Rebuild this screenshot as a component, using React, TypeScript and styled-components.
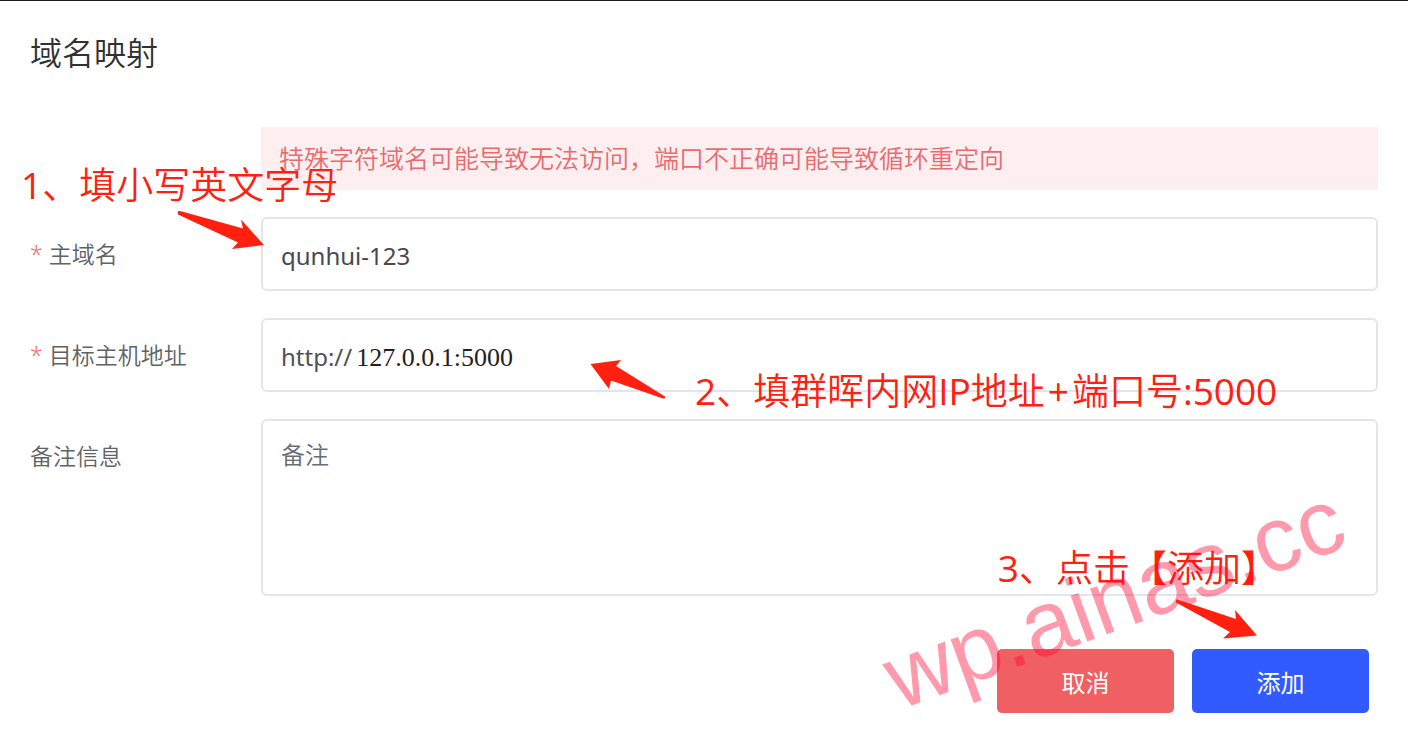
import React, { useState } from "react";
import styled, { createGlobalStyle } from "styled-components";

const GlobalStyle = createGlobalStyle`
  * { box-sizing: border-box; }
  body {
    margin: 0;
    background: #fff;
    font-family: "Noto Sans", "Noto Sans CJK SC", sans-serif;
    color: #606266;
  }
`;

const Page = styled.main`
  position: relative;
  overflow: hidden;
  border-top: 1px solid #1f1f23;
  padding: 28px 30px 30px;
`;

const Title = styled.h1`
  margin: 0 0 50px;
  font-size: 32px;
  line-height: 48px;
  font-weight: 350;
  color: #303133;
`;

const Form = styled.form`
  display: flex;
  flex-direction: column;
  gap: 27px;
`;

const Alert = styled.p`
  margin: 0 0 0 231px;
  padding: 0 18px;
  background: #fdeff0;
  color: #e96b70;
  font-size: 25px;
  line-height: 63px;
  font-weight: 350;
`;

const Row = styled.div`
  display: flex;
  align-items: flex-start;
`;

const Label = styled.label<{ $required?: boolean }>`
  flex: 0 0 231px;
  font-size: 23px;
  line-height: 74px;
  font-weight: 350;

  &::before {
    content: ${(p) => (p.$required ? '"*"' : "none")};
    margin-right: 6px;
    color: #f56c6c;
  }
`;

const Box = styled.div`
  flex: 1;
  min-width: 0;
  display: flex;
  align-items: center;
  gap: 4px;
  height: 74px;
  padding: 2px 18px 0;
  border: 2px solid #e4e4ec;
  border-radius: 6px;
  background: #fff;
  font-size: 24px;
`;

const Prefix = styled.span`
  color: #505156;
`;

const Input = styled.input<{ $serif?: boolean }>`
  flex: 1;
  min-width: 0;
  border: 0;
  padding: ${(p) => (p.$serif ? "4px 0 0" : "0")};
  outline: 0;
  background: transparent;
  color: ${(p) => (p.$serif ? "#222" : "#47494e")};
  font-family: ${(p) => (p.$serif ? '"Liberation Serif", serif' : "inherit")};
  font-size: ${(p) => (p.$serif ? "26px" : "24px")};
`;

const TextArea = styled.textarea`
  flex: 1;
  min-width: 0;
  height: 177px;
  padding: 16px 18px;
  border: 2px solid #e4e4ec;
  border-radius: 6px;
  outline: 0;
  resize: none;
  background: #fff;
  color: #47494e;
  font-family: inherit;
  font-size: 24px;
  line-height: 36px;
  font-weight: 350;

  &::placeholder { color: #6b6c70; }
`;

const Actions = styled.div`
  display: flex;
  justify-content: flex-end;
  gap: 18px;
  padding: 26px 9px 0 0;
`;

const Button = styled.button<{ $tone: string }>`
  width: 177px;
  height: 64px;
  border: 0;
  border-radius: 5px;
  background: ${(p) => p.$tone};
  color: #fff;
  font-family: inherit;
  font-size: 24px;
`;

const Note = styled.p<{ $top: number; $left?: number; $right?: number }>`
  position: absolute;
  top: ${(p) => p.$top}px;
  left: ${(p) => (p.$left === undefined ? "auto" : `${p.$left}px`)};
  right: ${(p) => (p.$right === undefined ? "auto" : `${p.$right}px`)};
  margin: 0;
  color: #ff2010;
  font-size: 37px;
  line-height: 54px;
  font-weight: 350;
  white-space: nowrap;
  pointer-events: none;
`;

const Latin = styled.span`
  font-family: "Open Sans", sans-serif;
  font-weight: 400;
`;

const Operator = styled(Latin)`
  margin: 0 3px;
`;

const ArrowSvg = styled.svg<{ $top: number; $left?: number; $right?: number }>`
  position: absolute;
  top: ${(p) => p.$top}px;
  left: ${(p) => (p.$left === undefined ? "auto" : `${p.$left}px`)};
  right: ${(p) => (p.$right === undefined ? "auto" : `${p.$right}px`)};
  pointer-events: none;
  fill: #ff2010;
`;

const Watermark = styled.div`
  position: absolute;
  top: 631px;
  right: 28px;
  font-family: "Liberation Sans", sans-serif;
  font-size: 92px;
  line-height: 92px;
  color: rgba(255, 0, 45, 0.4);
  transform: rotate(-20deg);
  transform-origin: 0 78px;
  white-space: nowrap;
  pointer-events: none;
`;

export default function App() {
  const [domain, setDomain] = useState("qunhui-123");
  const [host, setHost] = useState("127.0.0.1:5000");
  const [remark, setRemark] = useState("");

  return (
    <>
      <GlobalStyle />
      <Page lang="zh-CN">
        <Title>域名映射</Title>
        <Form onSubmit={(e) => e.preventDefault()}>
          <Alert role="alert">特殊字符域名可能导致无法访问，端口不正确可能导致循环重定向</Alert>
          <Row>
            <Label htmlFor="domain" $required>主域名</Label>
            <Box>
              <Input id="domain" value={domain} onChange={(e) => setDomain(e.target.value)} />
            </Box>
          </Row>
          <Row>
            <Label htmlFor="host" $required>目标主机地址</Label>
            <Box>
              <Prefix>http://</Prefix>
              <Input id="host" $serif value={host} onChange={(e) => setHost(e.target.value)} />
            </Box>
          </Row>
          <Row>
            <Label htmlFor="remark">备注信息</Label>
            <TextArea id="remark" placeholder="备注" value={remark} onChange={(e) => setRemark(e.target.value)} />
          </Row>
          <Actions>
            <Button type="button" $tone="#f05f62">取消</Button>
            <Button type="submit" $tone="#315bff">添加</Button>
          </Actions>
        </Form>

        <Note $top={157} $left={21}><Latin>1</Latin>、填小写英文字母</Note>
        <ArrowSvg $top={209} $left={176} width="90" height="42" aria-hidden="true">
          <path d="M1.5 1.5 Q3 .6 6 1.5 L67 18.5 L65 9.5 L88 35 L56 39 L62 32.5 L2 4.5 Z" />
        </ArrowSvg>

        <Note $top={363} $left={695}>
          <Latin>2</Latin>、填群晖内网<Latin>IP</Latin>地址<Operator>+</Operator>端口号<Latin>:5000</Latin>
        </Note>
        <ArrowSvg $top={357} $left={588} width="80" height="44" aria-hidden="true">
          <path d="M2.5 6 L33 2 L28 8 L77 38.5 Q78 41 75 40.5 L23 22.5 L21 31 Z" />
        </ArrowSvg>

        <Note $top={540} $right={130}><Latin>3</Latin>、点击【添加】</Note>
        <Watermark aria-hidden="true">wp.ainas.cc</Watermark>
        <ArrowSvg $top={598} $right={149} width="84" height="42" aria-hidden="true">
          <path d="M1 .5 Q2 .2 4 1 L61 20 L60 11 L82 36.5 L48 39.5 L55 33 L1 3.5 Z" />
        </ArrowSvg>
      </Page>
    </>
  );
}
